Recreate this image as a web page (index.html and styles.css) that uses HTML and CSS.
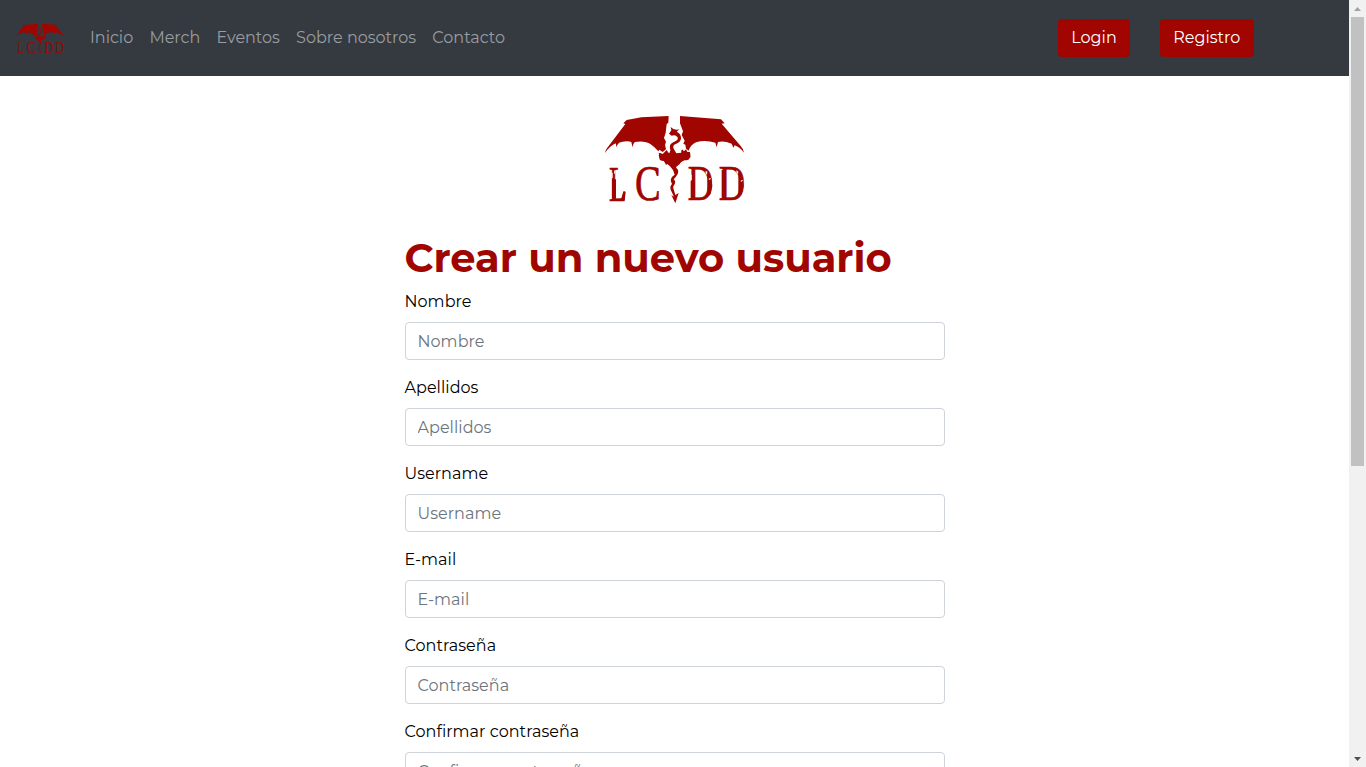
FILE: index.html
```html
<!DOCTYPE html>
<html lang="es">
<head>
<meta charset="utf-8">
<title>LCDD - Registro</title>
<link rel="stylesheet" href="styles.css">
</head>
<body>
<div class="window">
  <div class="page">
    <nav class="navbar">
      <a class="brand"><svg class="brand-logo" viewBox="4 3 438 280">
        <path d="M206 18 L80 30 L70 40 L76 42 L22 113 Q15 121 15 129 Q28 109 47 100 Q49 106 49 112 Q53 98 64 96 Q82 91 94 96 Q96 106 98 112 Q100 99 105 96 Q135 91 152 103 Q164 111 175 124 L178 119 L188 126 L198 118 L201 72 L193 55 L205 38 Z"/>
        <path d="M240 18 L363 28 L374 40 L365 41 L422 108 Q430 116 432 128 Q420 112 404 106 L400 113 L395 101 Q372 92 354 96 L350 112 L346 98 Q315 88 288 97 Q272 104 266 122 L258 116 L256 104 L250 101 L254 92 L245 75 L249 64 L240 40 Z"/>
        <path d="M207 71 L214 61 L212 51 L220 57 Q230 61 238 58 L230 65 Q244 71 243 86 Q241 96 229 101 Q216 105 221 116 L229 130 L245 128 L244 119 L251 129 L257 120 L260 129 L270 126 L271 141 L264 150 L252 151 Q241 155 238 163 L235 160 L228 173 Q238 180 233 192 Q228 201 221 208 Q229 215 223 224 Q218 229 220 235 L226 255 L236 249 L226 280 L214 255 L222 260 L212 239 Q209 229 216 222 Q210 214 213 206 Q216 199 224 194 L219 180 L207 165 L202 161 L198 165 L192 153 L180 150 L176 136 L180 129 L190 134 L197 127 L208 130 L211 121 L216 130 Q208 117 210 107 Q212 99 226 94 Q237 88 232 81 Q227 73 215 77 Z"/>
        <g class="logo-letters">
          <text x="27" y="272" textLength="52" lengthAdjust="spacingAndGlyphs">L</text>
          <text x="105" y="271" textLength="77" lengthAdjust="spacingAndGlyphs">C</text>
          <text x="263" y="271" textLength="76" lengthAdjust="spacingAndGlyphs">D</text>
          <text x="356" y="271" textLength="79" lengthAdjust="spacingAndGlyphs">D</text>
        </g>
      </svg></a>
      <ul class="nav-links">
        <li>Inicio</li>
        <li>Merch</li>
        <li>Eventos</li>
        <li>Sobre nosotros</li>
        <li>Contacto</li>
      </ul>
      <div class="actions">
        <a class="btn">Login</a>
        <a class="btn">Registro</a>
      </div>
    </nav>
    <main class="content">
      <svg class="hero-logo" viewBox="0 0 450 300">
        <path d="M206 18 L124 22 L80 30 L70 40 L76 42 L22 113 Q15 121 15 129 Q28 109 47 100 Q49 106 49 112 Q53 98 64 96 Q82 91 94 96 Q96 106 98 112 Q100 99 105 96 Q135 91 152 103 Q164 111 175 124 L178 119 L188 126 L198 118 L195 105 L198 95 L192 84 L197 68 L200 42 L205 38 Z"/>
        <path d="M240 18 L363 28 L374 40 L365 41 L422 108 Q430 116 432 128 Q420 112 404 106 L400 113 L395 101 Q372 92 354 96 L350 112 L346 98 Q315 88 288 97 Q272 104 266 122 L258 116 L256 104 L250 101 L254 92 L245 75 L249 64 L240 40 Z"/>
        <path d="M207 71 L214 61 L212 51 L220 57 Q230 61 238 58 L230 65 Q244 71 243 86 Q241 96 229 101 Q216 105 221 116 L229 130 L245 128 L244 119 L251 129 L257 120 L260 129 L270 126 L271 141 L264 150 L252 151 Q241 155 238 163 L235 160 L228 173 Q238 180 233 192 Q228 201 221 208 Q229 215 223 224 Q218 229 220 235 L226 255 L236 249 L226 280 L214 255 L222 260 L212 239 Q209 229 216 222 Q210 214 213 206 Q216 199 224 194 L219 180 L207 165 L202 161 L198 165 L192 153 L180 150 L176 136 L180 129 L190 134 L197 127 L208 130 L211 121 L216 130 Q208 117 210 107 Q212 99 226 94 Q237 88 232 81 Q227 73 215 77 Z"/>
        <path d="M176 128 L188 132 L200 120 L208 132 L243 132 L246 118 L252 124 L258 118 L262 126 L270 126 L271 141 L264 150 L252 151 Q241 155 238 163 L232 168 L214 170 L198 160 L192 153 L180 150 Z"/>
        <g class="logo-letters">
          <text x="27" y="272" textLength="52" lengthAdjust="spacingAndGlyphs">L</text>
          <text x="105" y="271" textLength="77" lengthAdjust="spacingAndGlyphs">C</text>
          <text x="263" y="271" textLength="76" lengthAdjust="spacingAndGlyphs">D</text>
          <text x="356" y="271" textLength="79" lengthAdjust="spacingAndGlyphs">D</text>
        </g>
        <path d="M36 208h12v58h-12z M272 212h12v54h-12z M365 180h12v86h-12z M70 245h7l-3 26h-12z M112 205l8-8v50l-6-4z M322 190l12 14 3 24-5 24-10 10z M415 190l12 14 4 24-6 24-10 10z M166 176l9 1-1 21-7-9z"/>
        <path class="logo-wear" d="M34 188h4v16h-4z M43 180l3 3-2 9-2-2z M270 194h5v16h-5z M317 182l5 3-1 9-4-4z M326 206l6-2v3l-5 3z M410 180l5 6-1 7-5-7z M422 212l6-3v3l-5 4z"/>
      </svg>
      <h1>Crear un nuevo usuario</h1>
      <form>
        <div class="field"><label for="nombre">Nombre</label><input id="nombre" placeholder="Nombre"></div>
        <div class="field"><label for="apellidos">Apellidos</label><input id="apellidos" placeholder="Apellidos"></div>
        <div class="field"><label for="username">Username</label><input id="username" placeholder="Username"></div>
        <div class="field"><label for="email">E-mail</label><input id="email" placeholder="E-mail"></div>
        <div class="field"><label for="pass">Contraseña</label><input id="pass" placeholder="Contraseña"></div>
        <div class="field"><label for="confirm">Confirmar contraseña</label><input id="confirm" placeholder="Confirmar contraseña"></div>
      </form>
    </main>
  </div>
  <div class="scrollbar">
    <svg class="arrow" viewBox="0 0 17 17"><path d="M5 11h7L8.500 7z" fill="#a3a3a3"/></svg>
    <div class="track"><div class="thumb"></div></div>
    <svg class="arrow" viewBox="0 0 17 17"><path d="M5 7h7L8.500 11z" fill="#505050"/></svg>
  </div>
</div>
</body>
</html>
```
FILE: styles.css
```css
* { box-sizing: border-box; }
body {
  margin: 0;
  overflow: hidden;
  font: 400 16px/24px Montserrat, Inter, "Open Sans", sans-serif;
  color: #000;
  background: #fff;
}
.window { display: flex; height: 767px; overflow: hidden; }
.page { flex: 1; overflow: hidden; }
.navbar {
  display: flex;
  align-items: center;
  height: 76px;
  padding: 0 95.500px 0 15px;
  background: #343a40;
}
.brand { width: 50px; margin-right: 25px; padding-bottom: 1px; }
.brand-logo { display: block; width: 50px; height: 32px; fill: #a00500; }
.nav-links { display: flex; gap: 16.200px; margin: 0; padding: 0; list-style: none; color: #9a9da0; white-space: nowrap; }
.actions { display: flex; gap: 30px; margin-left: auto; }
.btn { height: 38px; padding: 7px 13.250px; line-height: 24px; border-radius: 4px; color: #fff; background: #a00500; }
.content { width: 540px; margin: 0 auto; padding-top: 34px; }
.hero-logo { display: block; width: 150px; height: 100px; margin: 0 auto 24px; fill: #a00500; }
.logo-letters { font: 150px "Liberation Serif", serif; stroke: #a00500; stroke-width: 2px; }
.brand-logo .logo-letters { stroke-width: 1px; opacity: .85; }
.logo-wear { fill: #fff; }
h1 { margin: 0 0 8px; font-size: 40px; line-height: 48px; font-weight: 700; color: #a00500; white-space: nowrap; }
.field { display: flex; flex-direction: column; gap: 8px; margin-bottom: 16px; }
label { line-height: 24px; letter-spacing: .04px; }
input {
  height: 38px;
  padding: 6px 12px;
  border: 1px solid #ced4da;
  border-radius: 4px;
  font: inherit;
  letter-spacing: .04px;
  background: #fff;
}
input::placeholder { color: #6c757d; opacity: 1; }
.scrollbar { display: flex; flex-direction: column; width: 17px; background: #f1f1f1; }
.arrow { display: block; width: 17px; height: 17px; }
.track { flex: 1; padding: 0 2px; }
.thumb { height: 449px; background: #c1c1c1; }
```
